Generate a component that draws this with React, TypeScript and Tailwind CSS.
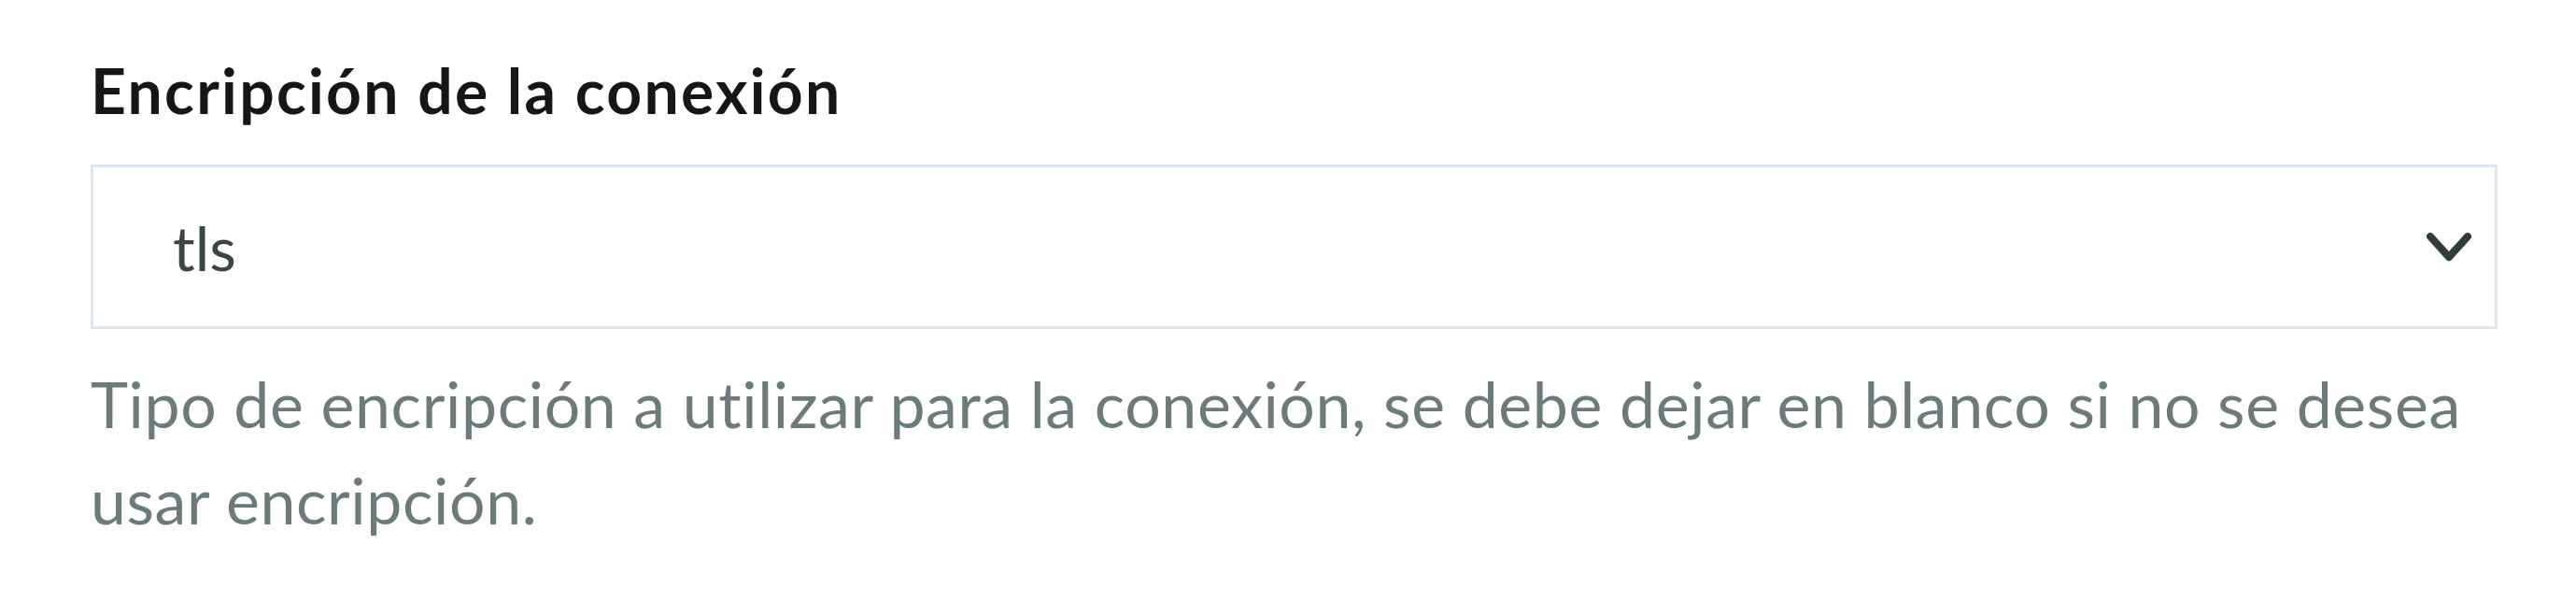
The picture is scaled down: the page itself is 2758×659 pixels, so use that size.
export default function App() {
  return (
    <div className="w-[2758px] h-[659px] bg-white pl-[97px] pr-[84px] pt-[57px] font-['Lato','Noto_Sans',sans-serif]">
      <label className="block text-[66px] leading-[1.2] font-bold tracking-[2.3px] text-[#161616]">
        Encripción de la conexión
      </label>

      <div className="mt-[40px] h-[176px] w-[2577px] border-[3px] border-[#dce7ef] bg-white flex items-center justify-between pl-[85px] pr-[24px]">
        <span className="text-[66px] leading-[1.2] text-[#3a4646]">tls</span>
        <svg width="50" height="32" viewBox="0 0 50 32" fill="none" className="shrink-0">
          <path d="M5 5 L25 27 L45 5" stroke="#2f3d3d" strokeWidth="8" strokeLinecap="round" strokeLinejoin="round" />
        </svg>
      </div>

      <p className="mt-[28px] w-[2577px] text-[68px] leading-[103px] tracking-[0.6px] text-[#6b7a7a]">
        Tipo de encripción a utilizar para la conexión, se debe dejar en blanco si no se desea usar encripción.
      </p>
    </div>
  );
}
